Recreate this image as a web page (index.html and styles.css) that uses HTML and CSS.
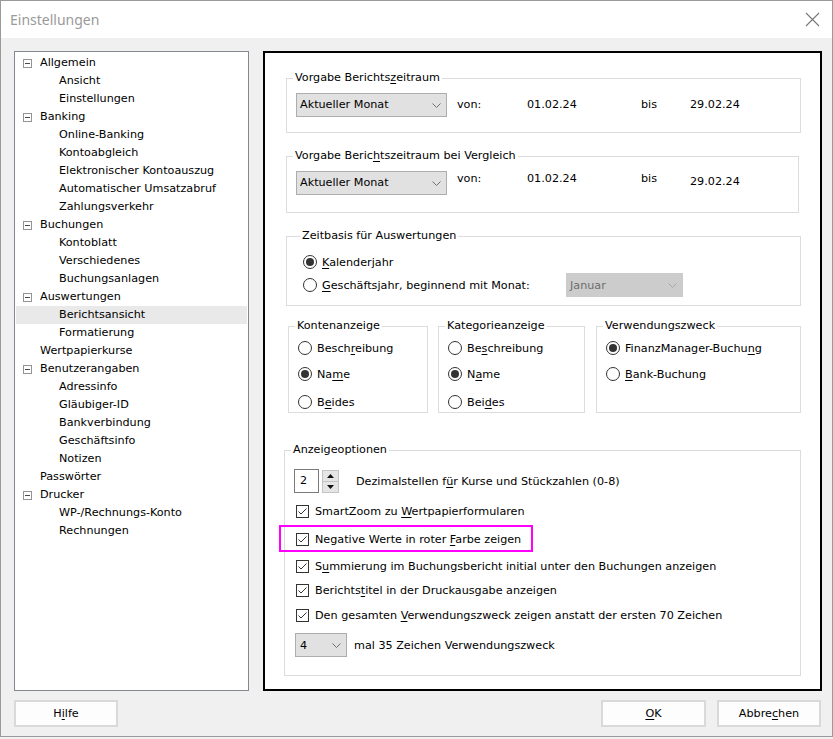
FILE: index.html
```html
<!DOCTYPE html>
<html lang="de">
<head>
<meta charset="utf-8">
<title>Einstellungen</title>
<link rel="stylesheet" href="styles.css">
</head>
<body>
<div class="window">
  <div class="titlebar">
    <span class="title">Einstellungen</span>
    <svg class="close" width="15" height="15" viewBox="0 0 15 15"><path d="M1 1 L14 14 M14 1 L1 14" stroke="#777" stroke-width="1.1" fill="none"/></svg>
  </div>
  <div class="main">
    <div class="tree">
      <div class="row l1"><span class="box"></span>Allgemein</div>
      <div class="row l2">Ansicht</div>
      <div class="row l2">Einstellungen</div>
      <div class="row l1"><span class="box"></span>Banking</div>
      <div class="row l2">Online-Banking</div>
      <div class="row l2">Kontoabgleich</div>
      <div class="row l2">Elektronischer Kontoauszug</div>
      <div class="row l2">Automatischer Umsatzabruf</div>
      <div class="row l2">Zahlungsverkehr</div>
      <div class="row l1"><span class="box"></span>Buchungen</div>
      <div class="row l2">Kontoblatt</div>
      <div class="row l2">Verschiedenes</div>
      <div class="row l2">Buchungsanlagen</div>
      <div class="row l1"><span class="box"></span>Auswertungen</div>
      <div class="row l2 sel">Berichtsansicht</div>
      <div class="row l2">Formatierung</div>
      <div class="row l1 nobox">Wertpapierkurse</div>
      <div class="row l1"><span class="box"></span>Benutzerangaben</div>
      <div class="row l2">Adressinfo</div>
      <div class="row l2">Gläubiger-ID</div>
      <div class="row l2">Bankverbindung</div>
      <div class="row l2">Geschäftsinfo</div>
      <div class="row l2">Notizen</div>
      <div class="row l1 nobox">Passwörter</div>
      <div class="row l1"><span class="box"></span>Drucker</div>
      <div class="row l2">WP-/Rechnungs-Konto</div>
      <div class="row l2">Rechnungen</div>
    </div>

    <div class="panel">
      <fieldset class="grp g1">
        <legend>Vorgabe Berichts<u>z</u>eitraum</legend>
        <div class="daterow">
          <div class="select sel-month"><span>Aktueller Monat</span><svg width="9" height="5" viewBox="0 0 9 5"><path d="M0.5 0.5 L4.5 4.5 L8.5 0.5" stroke="#707070" fill="none"/></svg></div>
          <span class="lbl-von">von:</span>
          <span class="date1">01.02.24</span>
          <span class="lbl-bis">bis</span>
          <span class="date2">29.02.24</span>
        </div>
      </fieldset>

      <fieldset class="grp g2">
        <legend>Vorgabe Beric<u>h</u>tszeitraum bei Vergleich</legend>
        <div class="daterow top">
          <div class="select sel-month"><span>Aktueller Monat</span><svg width="9" height="5" viewBox="0 0 9 5"><path d="M0.5 0.5 L4.5 4.5 L8.5 0.5" stroke="#707070" fill="none"/></svg></div>
          <span class="lbl-von up1">von:</span>
          <span class="date1 up1">01.02.24</span>
          <span class="lbl-bis up1">bis</span>
          <span class="date2 up4">29.02.24</span>
        </div>
      </fieldset>

      <fieldset class="grp g3">
        <legend>Zeitbasis für Auswertungen</legend>
        <div class="radio r-first"><span class="dot on"></span><span><u>K</u>alenderjahr</span></div>
        <div class="radio r-second"><span class="dot"></span><span class="fy-label"><u>G</u>eschäftsjahr, beginnend mit Monat:</span>
          <div class="select disabled sel-jan"><span>Januar</span><svg width="9" height="5" viewBox="0 0 9 5"><path d="M0.5 0.5 L4.5 4.5 L8.5 0.5" stroke="#a8a8a8" fill="none"/></svg></div>
        </div>
      </fieldset>

      <div class="trio">
        <fieldset class="grp small konten">
          <legend>Kontenanzeige</legend>
          <div class="radio s1"><span class="dot"></span><span>Besch<u>r</u>eibung</span></div>
          <div class="radio s2"><span class="dot on"></span><span>Na<u>m</u>e</span></div>
          <div class="radio s3"><span class="dot"></span><span>B<u>e</u>ides</span></div>
        </fieldset>
        <fieldset class="grp small kat">
          <legend>Kategorieanzeige</legend>
          <div class="radio s1"><span class="dot"></span><span>Be<u>s</u>chreibung</span></div>
          <div class="radio s2"><span class="dot on"></span><span>N<u>a</u>me</span></div>
          <div class="radio s3"><span class="dot"></span><span>Bei<u>d</u>es</span></div>
        </fieldset>
        <fieldset class="grp small verw">
          <legend>Verwendungszweck</legend>
          <div class="radio s1"><span class="dot on"></span><span>FinanzManager-Buchu<u>n</u>g</span></div>
          <div class="radio s2"><span class="dot"></span><span><u>B</u>ank-Buchung</span></div>
        </fieldset>
      </div>

      <fieldset class="grp opts">
        <legend>Anzeigeoptionen</legend>
        <div class="spinrow">
          <div class="numbox">2</div>
          <div class="spin">
            <div class="spinbtn"><svg width="7" height="4" viewBox="0 0 7 4"><path d="M0 4 L3.5 0 L7 4 Z" fill="#111"/></svg></div>
            <div class="spinbtn"><svg width="7" height="4" viewBox="0 0 7 4"><path d="M0 0 L3.5 4 L7 0 Z" fill="#111"/></svg></div>
          </div>
          <span class="spinlabel">Dezimalstellen f<u>ü</u>r Kurse und Stückzahlen (0-8)</span>
        </div>
        <div class="check c1"><svg class="cb" width="13" height="13" viewBox="0 0 13 13"><rect x="0.5" y="0.5" width="12" height="12" fill="#fff" stroke="#333"/><path d="M2.5 6.5 L5 9 L10.5 3.5" stroke="#333" fill="none"/></svg><span>SmartZoom zu <u>W</u>ertpapierformularen</span></div>
        <div class="check c2"><span class="mark"></span><svg class="cb" width="13" height="13" viewBox="0 0 13 13"><rect x="0.5" y="0.5" width="12" height="12" fill="#fff" stroke="#333"/><path d="M2.5 6.5 L5 9 L10.5 3.5" stroke="#333" fill="none"/></svg><span>Negative Werte in roter <u>F</u>arbe zeigen</span></div>
        <div class="check c3"><svg class="cb" width="13" height="13" viewBox="0 0 13 13"><rect x="0.5" y="0.5" width="12" height="12" fill="#fff" stroke="#333"/><path d="M2.5 6.5 L5 9 L10.5 3.5" stroke="#333" fill="none"/></svg><span>S<u>u</u>mmierung im Buchungsbericht initial unter den Buchungen anzeigen</span></div>
        <div class="check c4"><svg class="cb" width="13" height="13" viewBox="0 0 13 13"><rect x="0.5" y="0.5" width="12" height="12" fill="#fff" stroke="#333"/><path d="M2.5 6.5 L5 9 L10.5 3.5" stroke="#333" fill="none"/></svg><span>Berichts<u>t</u>itel in der Druckausgabe anzeigen</span></div>
        <div class="check c5"><svg class="cb" width="13" height="13" viewBox="0 0 13 13"><rect x="0.5" y="0.5" width="12" height="12" fill="#fff" stroke="#333"/><path d="M2.5 6.5 L5 9 L10.5 3.5" stroke="#333" fill="none"/></svg><span>Den gesamten <u>V</u>erwendungszweck zeigen anstatt der ersten 70 Zeichen</span></div>
        <div class="linesrow">
          <div class="select sel-four"><span>4</span><svg width="9" height="5" viewBox="0 0 9 5"><path d="M0.5 0.5 L4.5 4.5 L8.5 0.5" stroke="#707070" fill="none"/></svg></div>
          <span class="lineslabel">mal 35 Zeichen Verwendungszweck</span>
        </div>
      </fieldset>
    </div>
  </div>
  <div class="btns">
    <div class="btn b-help">H<u>i</u>lfe</div>
    <div class="btn b-ok"><u>O</u>K</div>
    <div class="btn b-cancel">Abbre<u>c</u>hen</div>
  </div>
</div>
</body>
</html>
```

FILE: styles.css
```css
html, body {
  margin: 0;
  padding: 0;
}
body {
  background: #f0f0f0;
  font-family: "DejaVu Sans", "Liberation Sans", sans-serif;
  font-size: 11.2px;
  color: #000;
}
u { text-decoration-thickness: 1px; text-underline-offset: 2px; }

.window {
  width: 833px;
  height: 737px;
  box-sizing: border-box;
  border: 1px solid #9a9a9a;
  background: #f0f0f0;
}

.titlebar {
  height: 37px;
  background: #fff;
  display: flex;
  align-items: center;
  justify-content: space-between;
  padding: 0 12px 0 9px;
}
.title {
  font-family: "Noto Sans", sans-serif;
  font-size: 14px;
  color: #9a9a9a;
}
.close { display: block; }

.main {
  display: flex;
  padding: 13px 0 0 13px;
}

/* tree */
.tree {
  width: 235px;
  height: 640px;
  box-sizing: border-box;
  border: 1px solid #828790;
  background: #fff;
  padding: 2px 1px 1px 1px;
}
.row {
  height: 18px;
  line-height: 18px;
  display: flex;
  align-items: center;
  white-space: nowrap;
}
.row.l1 { padding-left: 7px; }
.row.l1.nobox { padding-left: 24px; }
.row.l2 { padding-left: 43px; }
.row.sel { background: #e9e9e9; }
.box {
  width: 9px;
  height: 9px;
  box-sizing: border-box;
  border: 1px solid #949494;
  margin-right: 8px;
  margin-top: 1px;
  background: #fff;
  display: flex;
  align-items: center;
  justify-content: center;
}
.box::after {
  content: "";
  width: 5px;
  height: 1px;
  background: #4a4a4a;
}

/* right panel */
.panel {
  width: 559px;
  height: 640px;
  box-sizing: border-box;
  margin-left: 14px;
  border: 2px solid #000;
  background: #fff;
  padding: 18px 19px 0 21px;
}

.grp {
  margin: 0;
  border: 1px solid #dcdcdc;
  min-width: 0;
}
.grp > legend {
  padding: 0 2px;
  line-height: 14px;
  margin-left: -3px;
}

.g1 { padding: 8px 9px 15px 9px; }
.g2 { padding: 8px 9px 17px 9px; margin-top: 16px; margin-right: 2px; }
.g3 { padding: 10px 9px 8px 16px; margin-top: 16px; }

.daterow {
  display: flex;
  align-items: center;
  line-height: 14px;
}
.daterow.top { align-items: flex-start; }
.up1 { margin-top: 1px; }
.up4 { margin-top: 4px; }
.lbl-von { margin-left: 10px; width: 70px; }
.date1 { width: 114px; }
.lbl-bis { width: 49px; }

.select {
  height: 24px;
  box-sizing: border-box;
  border: 1px solid #adadad;
  background: #e1e1e1;
  display: flex;
  align-items: center;
  justify-content: space-between;
  padding: 0 5px 0 3px;
  white-space: nowrap;
}
.select svg { display: block; }
.sel-month { width: 151px; }
.sel-jan { width: 117px; }
.select.disabled {
  background: #cccccc;
  border-color: #cccccc;
  color: #6d6d6d;
}

.radio {
  display: flex;
  align-items: center;
  white-space: nowrap;
}
.dot {
  width: 14px;
  height: 14px;
  box-sizing: border-box;
  border: 1px solid #333;
  border-radius: 50%;
  background: #fff;
  margin-right: 5px;
  display: flex;
  align-items: center;
  justify-content: center;
  flex: none;
}
.dot.on::after {
  content: "";
  width: 8px;
  height: 8px;
  border-radius: 50%;
  background: #333;
}
.r-first { height: 18px; }
.r-second { height: 24px; margin-top: 2px; }
.fy-label { width: 244px; }

.trio {
  display: flex;
  margin-top: 13px;
  margin-left: 2px;
}
.small { padding: 6px 9px 1px 9px; box-sizing: border-box; }
.konten { width: 140px; }
.kat { width: 147px; margin-left: 10px; }
.verw { width: 205px; margin-left: 11px; }
.s1, .s2, .s3 { height: 18px; }
.s2 { margin-top: 8px; }
.s3 { margin-top: 10px; }

.opts {
  margin-top: 30px;
  margin-left: -2px;
  padding: 12px 11px 18px 11px;
}
.opts > legend { margin-left: -5px; }
.spinrow {
  display: flex;
  align-items: center;
  height: 24px;
}
.numbox {
  width: 25px;
  height: 24px;
  box-sizing: border-box;
  border: 1px solid #7a7a7a;
  margin-left: -2px;
  padding-left: 5px;
  line-height: 22px;
}
.spin {
  width: 17px;
  height: 23px;
  margin-left: 3px;
  display: flex;
  flex-direction: column;
  align-self: flex-end;
}
.spinbtn {
  flex: 1;
  border: 1px solid #c4c4c4;
  background: #e5e5e5;
  display: flex;
  align-items: center;
  justify-content: center;
}
.spinbtn + .spinbtn { border-top: none; }
.spinbtn svg { display: block; }
.spinlabel { margin-left: 17px; }

.check {
  display: flex;
  align-items: center;
  height: 18px;
  white-space: nowrap;
  position: relative;
}
.cb { display: block; margin-right: 6px; flex: none; }
.c1 { margin-top: 9px; }
.c2 { margin-top: 10px; }
.c3 { margin-top: 9px; }
.c4 { margin-top: 6px; }
.c5 { margin-top: 7px; }
.mark {
  position: absolute;
  left: -17px;
  top: -5px;
  width: 254px;
  height: 27px;
  box-sizing: border-box;
  border: 2px solid #ff00ff;
}
.linesrow {
  display: flex;
  align-items: center;
  margin-top: 9px;
}
.sel-four { width: 52px; margin-left: -1px; padding-left: 4px; }
.lineslabel { margin-left: 7px; }

/* buttons */
.btns {
  display: flex;
  padding: 9px 11px 0 13px;
}
.btn {
  height: 27px;
  box-sizing: border-box;
  border: 2px solid #d9d9d9;
  background: #fdfdfd;
  display: flex;
  align-items: center;
  justify-content: center;
}
.b-help { width: 104px; }
.b-ok { width: 105px; margin-left: auto; }
.b-cancel { width: 104px; margin-left: 11px; }
```
